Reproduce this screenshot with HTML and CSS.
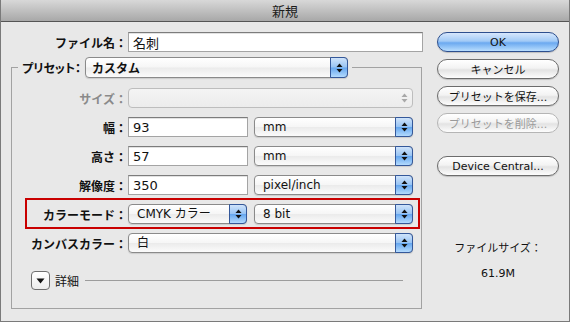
FILE: index.html
```html
<!DOCTYPE html>
<html lang="ja">
<head>
    <meta charset="UTF-8">
    <title>新規</title>
    <link rel="stylesheet" href="styles.css">
</head>
<body>

<div class="window">
    <div class="titlebar">新規</div>

    <div class="content">
        <!-- left side: document settings -->
        <div class="main">
            <div class="row name-row">
                <span class="lbl">ファイル名：</span>
                <input class="field name-field" type="text" value="名刺">
            </div>

            <fieldset class="preset">
                <legend>
                    <span class="lbl preset-lbl">プリセット：</span>
                    <span class="popup preset-pop">
                        <span class="val">カスタム</span>
                        <span class="arrows"><svg width="7" height="12" viewBox="0 0 7 12"><polygon points="0.5,5 3.5,1.5 6.5,5"/><polygon points="0.5,7 3.5,10.5 6.5,7"/></svg></span>
                    </span>
                </legend>

                <div class="row">
                    <span class="lbl dim">サイズ：</span>
                    <span class="popup full disabled">
                        <span class="val"></span>
                        <span class="arrows"><svg width="7" height="12" viewBox="0 0 7 12"><polygon points="0.5,5 3.5,1.5 6.5,5"/><polygon points="0.5,7 3.5,10.5 6.5,7"/></svg></span>
                    </span>
                </div>

                <div class="row">
                    <span class="lbl">幅：</span>
                    <input class="field num" type="text" value="93">
                    <span class="popup unit">
                        <span class="val">mm</span>
                        <span class="arrows"><svg width="7" height="12" viewBox="0 0 7 12"><polygon points="0.5,5 3.5,1.5 6.5,5"/><polygon points="0.5,7 3.5,10.5 6.5,7"/></svg></span>
                    </span>
                </div>

                <div class="row">
                    <span class="lbl">高さ：</span>
                    <input class="field num" type="text" value="57">
                    <span class="popup unit">
                        <span class="val">mm</span>
                        <span class="arrows"><svg width="7" height="12" viewBox="0 0 7 12"><polygon points="0.5,5 3.5,1.5 6.5,5"/><polygon points="0.5,7 3.5,10.5 6.5,7"/></svg></span>
                    </span>
                </div>

                <div class="row">
                    <span class="lbl">解像度：</span>
                    <input class="field num" type="text" value="350">
                    <span class="popup unit">
                        <span class="val">pixel/inch</span>
                        <span class="arrows"><svg width="7" height="12" viewBox="0 0 7 12"><polygon points="0.5,5 3.5,1.5 6.5,5"/><polygon points="0.5,7 3.5,10.5 6.5,7"/></svg></span>
                    </span>
                </div>

                <div class="row hl">
                    <span class="lbl">カラーモード：</span>
                    <span class="popup mode">
                        <span class="val">CMYK カラー</span>
                        <span class="arrows"><svg width="7" height="12" viewBox="0 0 7 12"><polygon points="0.5,5 3.5,1.5 6.5,5"/><polygon points="0.5,7 3.5,10.5 6.5,7"/></svg></span>
                    </span>
                    <span class="popup unit">
                        <span class="val">8 bit</span>
                        <span class="arrows"><svg width="7" height="12" viewBox="0 0 7 12"><polygon points="0.5,5 3.5,1.5 6.5,5"/><polygon points="0.5,7 3.5,10.5 6.5,7"/></svg></span>
                    </span>
                </div>

                <div class="row">
                    <span class="lbl">カンバスカラー：</span>
                    <span class="popup full">
                        <span class="val">白</span>
                        <span class="arrows"><svg width="7" height="12" viewBox="0 0 7 12"><polygon points="0.5,5 3.5,1.5 6.5,5"/><polygon points="0.5,7 3.5,10.5 6.5,7"/></svg></span>
                    </span>
                </div>

                <!-- advanced section toggle -->
                <div class="details">
                    <span class="disclosure"><svg width="9" height="6" viewBox="0 0 9 6"><polygon points="0.5,0.5 8.5,0.5 4.5,5.5"/></svg></span>
                    <span class="details-lbl">詳細</span>
                    <span class="rule"></span>
                </div>
            </fieldset>
        </div>

        <!-- right side: buttons and size -->
        <div class="side">
            <button class="btn default">OK</button>
            <button class="btn">キャンセル</button>
            <button class="btn">プリセットを保存...</button>
            <button class="btn disabled">プリセットを削除...</button>
            <button class="btn device">Device Central...</button>

            <div class="filesize">ファイルサイズ：</div>
            <div class="filesize-val">61.9M</div>
        </div>
    </div>
</div>

</body>
</html>
```

FILE: styles.css
```css
body {
    margin: 0;
    font-family: "DejaVu Sans", "Noto Sans CJK JP", sans-serif;
    color: #111;
}
.window {
    width: 570px;
    height: 322px;
    box-sizing: border-box;
    background-color: #e8e8e8;
    border: 1px solid #7a7a7a;
    border-top: none;
    display: flex;
    flex-direction: column;
}
.titlebar {
    height: 21px;
    line-height: 21px;
    border-bottom: 1px solid #555;
    background: linear-gradient(#d8d8d8, #a8a8a8);
    text-align: center;
    font-family: "Noto Sans CJK JP", sans-serif;
    font-size: 13px;
    color: #1c1c1c;
}
.content {
    display: flex;
    padding: 10px 10px 0 10px;
}
.main {
    width: 412px;
}
.side {
    width: 122px;
    margin-left: 14px;
    display: flex;
    flex-direction: column;
}

/* rows */
.row {
    display: flex;
    align-items: center;
    height: 20px;
    margin-top: 9px;
}
.name-row {
    margin-top: 0;
}
.lbl {
    font-family: "Noto Sans CJK JP", sans-serif;
    font-weight: bold;
    font-size: 12px;
    text-align: right;
    width: 115px;
    margin-right: 1px;
    white-space: nowrap;
    color: #111;
}
.name-row .lbl {
    width: 116px;
}
.lbl.dim {
    color: #8a8a8a;
}
.field {
    box-sizing: border-box;
    height: 20px;
    border: 1px solid #a4a4a4;
    border-top-color: #7c7c7c;
    box-shadow: inset 0 1px 0 #e2e2e2;
    background-color: #fff;
    padding: 1px 4px 0;
    font-family: "DejaVu Sans", "Noto Sans CJK JP", sans-serif;
    font-size: 13px;
    color: #111;
    outline: none;
}
.name-field {
    width: 295px;
}
.field.num {
    width: 120px;
    margin-right: 6px;
}

/* preset group box */
.preset {
    margin: 5px 1px 0 0;
    padding: 1px 0 18px 0;
    border: 1px solid #a2a2a2;
}
.preset legend {
    display: flex;
    align-items: center;
    margin-left: 6px;
    padding: 0 4px 0 4px;
}
.preset-lbl {
    width: auto;
    margin-right: 4px;
    font-feature-settings: "palt";
}

/* popup menus */
.popup {
    box-sizing: border-box;
    height: 20px;
    display: flex;
    align-items: stretch;
    border: 1px solid #8a8a8a;
    border-radius: 4px;
    background: linear-gradient(#ffffff, #f6f6f6 48%, #ebebeb 52%, #fbfbfb);
    box-shadow: 0 1px 1px rgba(0, 0, 0, 0.12);
}
.popup .val {
    flex: 1;
    padding-left: 8px;
    font-size: 12px;
    line-height: 18px;
    white-space: nowrap;
    overflow: hidden;
}
.popup .arrows {
    width: 16px;
    margin: -1px -1px -1px 0;
    border: 1px solid #34589a;
    border-radius: 0 4px 4px 0;
    background: linear-gradient(#cfe3fa, #98c4f4 48%, #66a7ef 52%, #b3dafd);
    display: flex;
    align-items: center;
    justify-content: center;
}
.popup .arrows svg {
    fill: #111;
}
.preset-pop {
    width: 263px;
    height: 21px;
}
.preset-pop .val {
    font-family: "Noto Sans CJK JP", sans-serif;
    font-weight: bold;
    line-height: 19px;
    padding-left: 6px;
}
.popup.full {
    width: 285px;
}
.popup.unit {
    width: 159px;
}
.popup.mode {
    width: 119px;
    margin-right: 7px;
}
.popup.disabled {
    border-color: #bdbdbd;
    background: linear-gradient(#f4f4f4, #ececec);
    box-shadow: none;
}
.popup.disabled .arrows {
    border: none;
    margin: 0;
    background: none;
}
.popup.disabled .arrows svg {
    fill: #a8a8a8;
}

/* red highlight around colour mode */
.hl {
    position: relative;
}
.hl::after {
    content: "";
    position: absolute;
    left: 13px;
    right: 1px;
    top: -6px;
    bottom: -5px;
    border: 2px solid #c90000;
}

/* details toggle */
.details {
    display: flex;
    align-items: center;
    margin-top: 18px;
    height: 19px;
}
.disclosure {
    box-sizing: border-box;
    width: 19px;
    height: 19px;
    margin-left: 19px;
    border: 1px solid #6e6e6e;
    border-radius: 4px;
    background: linear-gradient(#ffffff, #ececec);
    display: flex;
    align-items: center;
    justify-content: center;
}
.disclosure svg {
    fill: #111;
}
.details-lbl {
    font-family: "Noto Sans CJK JP", sans-serif;
    font-size: 12px;
    margin-left: 5px;
}
.rule {
    flex: 1;
    height: 1px;
    background-color: #9c9c9c;
    margin: 0 18px 0 6px;
}

/* buttons */
.btn {
    box-sizing: border-box;
    height: 20px;
    width: 122px;
    margin-bottom: 7px;
    padding: 0;
    border: 1px solid #6c6c6c;
    border-radius: 10px;
    background: linear-gradient(#ffffff, #f3f3f3 45%, #e3e3e3 55%, #fdfdfd);
    box-shadow: 0 1px 1px rgba(0, 0, 0, 0.18);
    font-family: "DejaVu Sans", "Noto Sans CJK JP", sans-serif;
    font-size: 11px;
    color: #111;
}
.btn.default {
    border-color: #2d4f8e;
    background: linear-gradient(#d6e7fc, #a2caf6 45%, #6ba9f0 55%, #b9defe);
}
.btn.disabled {
    color: #9a9a9a;
    border-color: #b5b5b5;
    box-shadow: none;
}
.btn.device {
    margin-top: 16px;
}
.filesize {
    margin-top: 56px;
    text-align: center;
    font-family: "Noto Sans CJK JP", sans-serif;
    font-size: 11px;
}
.filesize-val {
    margin-top: 12px;
    text-align: center;
    font-size: 11px;
}
```
